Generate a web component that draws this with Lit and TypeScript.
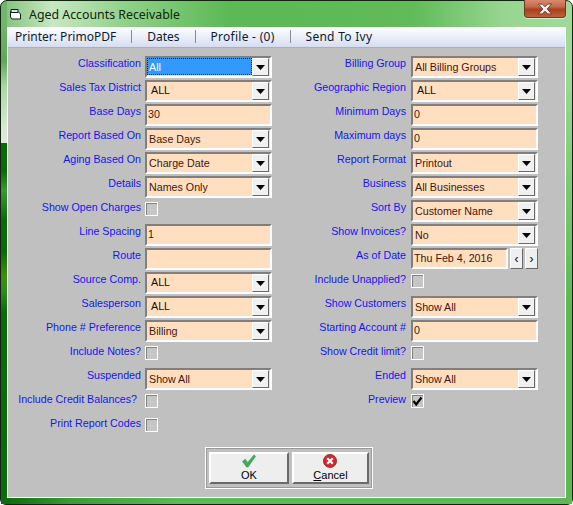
import { LitElement, html, css, svg } from "lit";
import { customElement } from "lit/decorators.js";
import { classMap } from "lit/directives/class-map.js";

type Field =
  | { label: string; kind: "select"; value: string; plain?: boolean; focus?: boolean }
  | { label: string; kind: "text"; value: string }
  | { label: string; kind: "check"; checked?: boolean; inset?: boolean }
  | { label: string; kind: "date"; value: string };

const rows: [Field, Field][] = [
  [{ label: "Classification", kind: "select", value: "All", focus: true }, { label: "Billing Group", kind: "select", value: "All Billing Groups" }],
  [{ label: "Sales Tax District", kind: "select", value: "ALL", plain: true }, { label: "Geographic Region", kind: "select", value: "ALL", plain: true }],
  [{ label: "Base Days", kind: "text", value: "30" }, { label: "Minimum Days", kind: "text", value: "0" }],
  [{ label: "Report Based On", kind: "select", value: "Base Days" }, { label: "Maximum days", kind: "text", value: "0" }],
  [{ label: "Aging Based On", kind: "select", value: "Charge Date" }, { label: "Report Format", kind: "select", value: "Printout" }],
  [{ label: "Details", kind: "select", value: "Names Only" }, { label: "Business", kind: "select", value: "All Businesses" }],
  [{ label: "Show Open Charges", kind: "check" }, { label: "Sort By", kind: "select", value: "Customer Name" }],
  [{ label: "Line Spacing", kind: "text", value: "1" }, { label: "Show Invoices?", kind: "select", value: "No" }],
  [{ label: "Route", kind: "text", value: "" }, { label: "As of Date", kind: "date", value: "Thu Feb 4, 2016" }],
  [{ label: "Source Comp.", kind: "select", value: "ALL", plain: true }, { label: "Include Unapplied?", kind: "check" }],
  [{ label: "Salesperson", kind: "select", value: "ALL", plain: true }, { label: "Show Customers", kind: "select", value: "Show All" }],
  [{ label: "Phone # Preference", kind: "select", value: "Billing" }, { label: "Starting Account #", kind: "text", value: "0" }],
  [{ label: "Include Notes?", kind: "check" }, { label: "Show Credit limit?", kind: "check" }],
  [{ label: "Suspended", kind: "select", value: "Show All" }, { label: "Ended", kind: "select", value: "Show All" }],
  [{ label: "Include Credit Balances?", kind: "check", inset: true }, { label: "Preview", kind: "check", checked: true }],
  [{ label: "Print Report Codes", kind: "check" }, { label: "", kind: "text", value: "" }],
];

const arrow = svg`<svg width="9" height="5" viewBox="0 0 9 5"><path d="M0 0H9L4.5 5Z" fill="#000"/></svg>`;
const checkMark = svg`<svg width="11" height="11" viewBox="0 0 11 11"><path d="M1.5 5L4.2 8.5L9.5 1.5" fill="none" stroke="#000" stroke-width="2.2"/></svg>`;

@customElement("app-root")
export class AppRoot extends LitElement {
  static styles = css`
    :host {
      display: block;
      width: 573px;
      height: 505px;
      font-family: "Liberation Sans", Arial, sans-serif;
      font-size: 10.7px;
      overflow: hidden;
    }
    * { box-sizing: border-box; }
    .window {
      position: relative;
      width: 573px;
      height: 505px;
      padding: 0 6px 6px;
      display: flex;
      flex-direction: column;
      border: 1px solid #10240f;
      border-radius: 7px 7px 6px 6px;
      background:
        linear-gradient(180deg, #74b56c 20px, #5fa858 60px, #a8d8a0 85px, #dce8d6 130px, #e0e8dc 142px, #0a6a0a 142px, #0a6a0a 170px, #3a9a30 190px, #0a6a0a 220px, #0a6a0a 250px, #3f8f10 275px, #2a8a20 292px, #0a6a0a 312px, #0d6c0d 100%) left top / 6px 100% no-repeat,
        linear-gradient(180deg, rgba(92, 185, 85, 0) 0, rgba(92, 185, 85, 0) 60px, #5cb955 300px) right top / 6px 100% no-repeat,
        linear-gradient(90deg, #7fc078 0, #c8e8c2 9%, #8ed188 22%, #5cb955 40%, #60bb58 72%, #97d690 88%, #a0da99 100%);
    }
    .foot-band {
      position: absolute;
      left: 0;
      right: 0;
      bottom: 0;
      height: 6px;
      background: linear-gradient(90deg, #0d6c0d 0, #0d6c0d 6px, #3a9a3a 12%, #5cb955 30%);
    }
    .title {
      height: 26px;
      flex: none;
      display: flex;
      align-items: center;
      gap: 7px;
      padding: 0 0 0 3px;
      font-family: "Noto Sans", sans-serif;
      color: #10240f;
    }
    .title span { font-size: 12.35px; }
    .close {
      position: absolute;
      top: -1px;
      right: 6px;
      width: 42px;
      height: 18px;
      border: 1px solid #6b3a25;
      border-top: none;
      border-radius: 0 0 4px 4px;
      background: linear-gradient(180deg, #d98a6c 0, #c4694a 40%, #a8401c 55%, #c0603a 100%);
      display: flex;
      align-items: center;
      justify-content: center;
      box-shadow: 0 1px 0 rgba(255, 255, 255, 0.5);
    }
    .client {
      position: relative;
      flex: 1;
      display: flex;
      flex-direction: column;
      background: #c0c0c0;
      border: 1px solid #fff;
      min-height: 0;
    }
    .menu {
      height: 20px;
      flex: none;
      display: flex;
      align-items: center;
      padding: 0 0 2px 7px;
      background: linear-gradient(180deg, #fcfdfe 0, #eef2fa 35%, #d5ddf0 100%);
      border-bottom: 1px solid #a9afc0;
      font-family: "Noto Sans", sans-serif;
      font-size: 12px;
      color: #0e1a30;
    }
    .menu span { white-space: nowrap; }
    .menu .wide { letter-spacing: 0.27px; }
    .menu i {
      width: 1px;
      height: 13px;
      background: #8a8a9a;
      margin: 0 15px;
    }
    .form {
      display: grid;
      grid-template-columns: 137px 127px 134px 127px;
      grid-auto-rows: 24px;
      padding: 8px 0 0 0;
    }
    .lab {
      text-align: right;
      color: #1515f0;
      white-space: nowrap;
      line-height: 14px;
      padding-right: 4px;
    }
    .lab.second { padding-right: 0; }
    .lab.inset { padding-right: 8px; }
    .ctl { height: 22px; width: 127px; }
    .ctl2 { margin-left: 5px; }
    .sunken {
      width: 100%;
      height: 22px;
      display: flex;
      align-items: stretch;
      border: 2px solid;
      border-color: #7f7f7f #fff #fff #7f7f7f;
      background: #ffdfc0;
      color: #45150a;
      line-height: 17px;
      white-space: nowrap;
    }
    .val { flex: 1; padding: 1px 0 0 2px; min-width: 0; }
    .val.field { padding: 0 0 0 1px; }
    .val.plain { padding: 0 0 0 4px; color: #101010; }
    .val.focus {
      background: #3399ff;
      color: #fff;
      margin: 0 0 1px;
      outline: 1px dotted #222;
      outline-offset: -1px;
    }
    .drop {
      flex: none;
      width: 17px;
      margin: 0 1px 0 0;
      background: #f0f0f0;
      border: 1px solid;
      border-color: #fff #6a6a6a #6a6a6a #fff;
      display: flex;
      align-items: center;
      justify-content: center;
    }
    .check {
      width: 13px;
      height: 14px;
      margin-top: 2px;
      background: #c6c6c6;
      border: 1px solid #fff;
      box-shadow: inset 1px 1px 0 #808080;
      display: flex;
      align-items: center;
      justify-content: center;
    }
    .date { display: flex; gap: 2px; width: 127px; }
    .date .sunken { width: 97px; height: 21px; }
    .spin {
      width: 13px;
      height: 21px;
      background: #efefef;
      border: 1px solid;
      border-color: #fff #6a6a6a #6a6a6a #fff;
      display: flex;
      align-items: center;
      justify-content: center;
      font-size: 12px;
      color: #000;
    }
    .foot {
      flex: 1;
      display: flex;
      justify-content: center;
      align-items: flex-start;
      padding: 7px 0 0 5px;
    }
    .btns {
      width: 168px;
      height: 42px;
      display: flex;
      gap: 3px;
      padding: 4px 3px;
      border: 1px solid #fff;
      box-shadow: inset 0 0 0 1px #9a9a9a;
    }
    .btn {
      background: #eeeeee;
      border: 2px solid;
      border-color: #fff #6a6a6a #6a6a6a #fff;
      display: flex;
      flex-direction: column;
      align-items: center;
      color: #000;
      font-size: 11px;
      line-height: 13px;
    }
    .btn svg { display: block; }
    .ok { width: 81px; }
    .cancel { width: 78px; }
    u { text-decoration: underline; }
    .icon { margin-bottom: 1px; }
  `;

  private control(f: Field, second: boolean) {
    const wrap = { ctl: true, ctl2: second };
    if (!f.label) return html`<div class=${classMap(wrap)}></div>`;
    switch (f.kind) {
      case "select":
        return html`<div class=${classMap(wrap)}><div class="sunken">
          <div class=${classMap({ val: true, plain: !!f.plain, focus: !!f.focus })}>${f.value}</div>
          <div class="drop">${arrow}</div>
        </div></div>`;
      case "text":
        return html`<div class=${classMap(wrap)}><div class="sunken"><div class="val field">${f.value}</div></div></div>`;
      case "check":
        return html`<div class=${classMap(wrap)}><div class="check">${f.checked ? checkMark : ""}</div></div>`;
      case "date":
        return html`<div class=${classMap(wrap)}><div class="date">
          <div class="sunken"><div class="val field">${f.value}</div></div>
          <div class="spin">‹</div><div class="spin">›</div>
        </div></div>`;
    }
  }

  private label(f: Field, second: boolean) {
    const inset = f.kind === "check" && !!f.inset;
    return html`<div class=${classMap({ lab: true, second, inset })}>${f.label}</div>`;
  }

  render() {
    return html`<div class="window">
      <div class="foot-band"></div>
      <div class="title">
        <svg width="12" height="12" viewBox="0 0 12 12">
          <path d="M0.5 3.5H8L10.5 6V11H2L0.5 9Z" fill="#fff" stroke="#10201a"/>
          <path d="M1 1.5H8V4.5H1Z" fill="#cfeaf6" stroke="#10201a"/>
        </svg>
        <span>Aged Accounts Receivable</span>
      </div>
      <div class="close">
        <svg width="18" height="12" viewBox="0 0 16 11">
          <path d="M2 1H5.5L8 3.5L10.5 1H14L10 5.5L14 10H10.5L8 7.5L5.5 10H2L6 5.5Z" fill="#eee" stroke="#5e3a30" stroke-width="0.8"/>
        </svg>
      </div>
      <div class="client">
        <div class="menu">
          <span>Printer: PrimoPDF</span><i></i><span>Dates</span><i></i><span class="wide">Profile - (0)</span><i></i><span class="wide">Send To Ivy</span>
        </div>
        <div class="form">
          ${rows.map(([a, b]) => html`
            ${this.label(a, false)}${this.control(a, false)}
            ${this.label(b, true)}${this.control(b, true)}
          `)}
        </div>
        <div class="foot">
          <div class="btns">
            <div class="btn ok">
              <svg class="icon" width="16" height="15" viewBox="0 0 16 15">
                <path d="M1 8L4 5.5L6.5 9L13.5 1L15 2.5L7 14H5.5Z" fill="#3fae5a" stroke="#2d8c48" stroke-width="0.6"/>
              </svg>
              <span>OK</span>
            </div>
            <div class="btn cancel">
              <svg class="icon" width="16" height="15" viewBox="0 0 16 15">
                <circle cx="8" cy="7.5" r="7" fill="#d8242c" stroke="#8e1a1e" stroke-width="0.8"/>
                <path d="M5 4.5L11 10.5M11 4.5L5 10.5" stroke="#fff" stroke-width="2.4"/>
              </svg>
              <span><u>C</u>ancel</span>
            </div>
          </div>
        </div>
      </div>
    </div>`;
  }
}
